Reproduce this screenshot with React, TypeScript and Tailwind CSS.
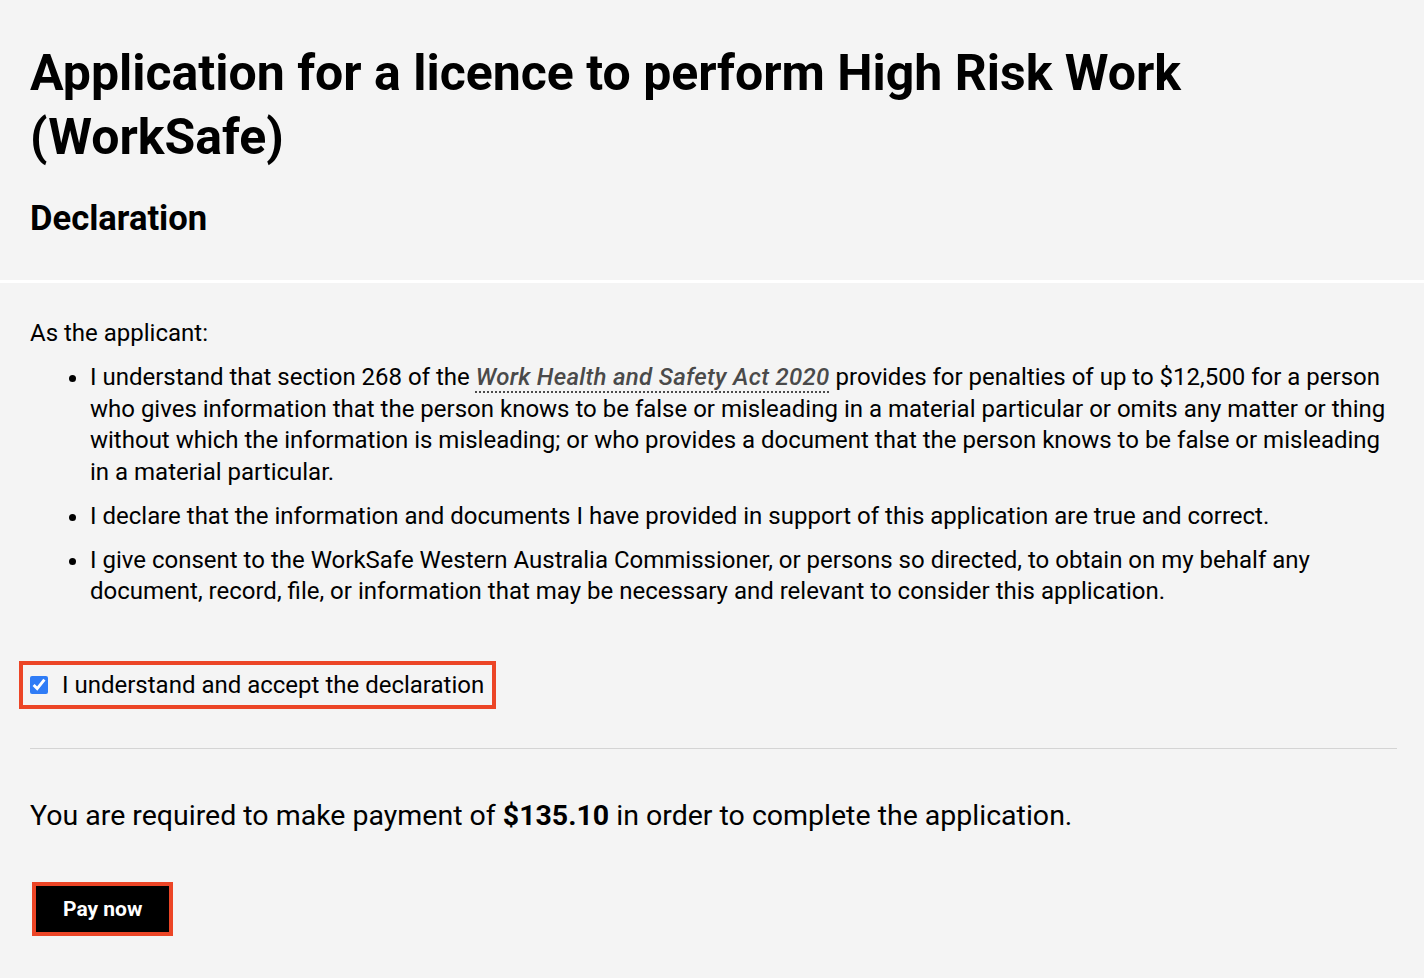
import React from "react";

export default function App() {
  return (
    <div
      className="min-h-[978px] w-full bg-[#f4f4f4] text-black"
      style={{ fontFamily: "Roboto, 'Liberation Sans', sans-serif" }}
    >
      <header className="px-[30px] pr-[27px] pt-[41px] pb-[42px]">
        <h1 className="text-[50px] font-bold leading-[64px]">
          Application for a licence to perform High Risk Work (WorkSafe)
        </h1>
        <h2 className="mt-[29px] text-[34.6px] font-bold leading-[40px]">Declaration</h2>
      </header>
      <div className="h-[3px] bg-white" />
      <main className="px-[30px] pr-[27px] pt-[34px] pb-[40px]">
        <p className="text-[24px] leading-[32px]">As the applicant:</p>
        <ul className="mt-[13px] list-disc pl-[60px] text-[24px] leading-[31.7px]">
          <li className="mb-[12px]">
            I understand that section 268 of the{" "}
            <span className="italic font-medium tracking-[0.3px] text-[#4a4a4a] underline decoration-dotted decoration-[2px] underline-offset-[6px]">
              Work Health and Safety Act 2020
            </span>{" "}
            provides for penalties of up to $12,500 for a person who gives information that the
            person knows to be false or misleading in a material particular or omits any matter or
            thing without which the information is misleading; or who provides a document that the
            person knows to be false or misleading in a material particular.
          </li>
          <li className="mb-[12px]">
            I declare that the information and documents I have provided in support of this
            application are true and correct.
          </li>
          <li>
            I give consent to the WorkSafe Western Australia Commissioner, or persons so directed, to
            obtain on my behalf any document, record, file, or information that may be necessary and
            relevant to consider this application.
          </li>
        </ul>

        <div className="mt-[53px] ml-[-11px] inline-flex items-center gap-[14px] border-[4px] border-[#ec4526] py-[4px] pl-[7px] pr-[8px]">
          <input
            type="checkbox"
            defaultChecked
            className="h-[18px] w-[18px] accent-[#2f7cf6]"
          />
          <span className="text-[24px] leading-[32px]">I understand and accept the declaration</span>
        </div>

        <hr className="mt-[39px] border-t border-[#d4d4d4]" />

        <p className="mt-[49px] text-[28.5px] leading-[36px]">
          You are required to make payment of <strong className="font-bold">$135.10</strong> in
          order to complete the application.
        </p>

        <div className="mt-[48px] ml-[2px] inline-block border-[4px] border-[#ec4526]">
          <button className="bg-black px-[27px] py-[10px] text-[21px] font-bold leading-[26px] text-white">
            Pay now
          </button>
        </div>
      </main>
    </div>
  );
}
